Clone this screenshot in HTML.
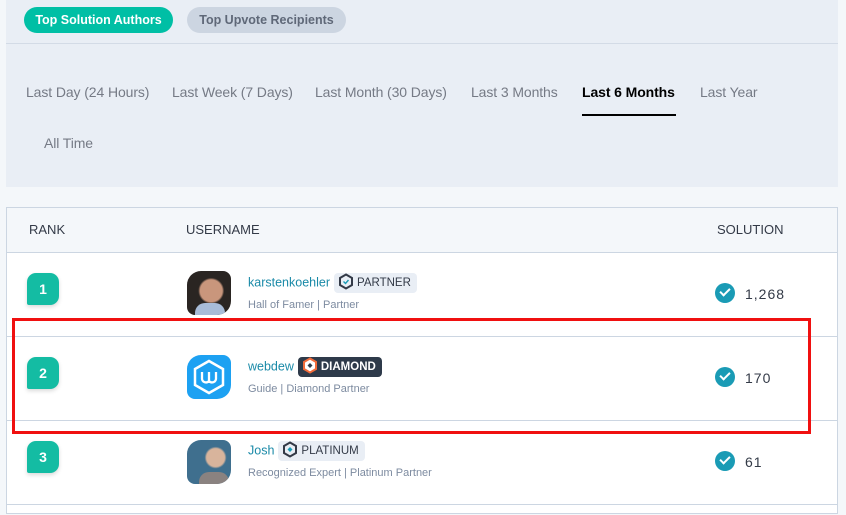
<!DOCTYPE html>
<html><head><style>
*{box-sizing:border-box;margin:0;padding:0}
body{width:846px;height:515px;overflow:hidden;background:#f4f7fa;font-family:"Liberation Sans",sans-serif;position:relative}
.abs{position:absolute}
.top{left:6px;top:0;width:832px;height:187px;background:#e9eef5}
.pill{position:absolute;top:7px;height:26px;border-radius:13px;font-size:12.5px;font-weight:bold;line-height:26px;text-align:center}
.tab{position:absolute;top:84px;font-size:14px;color:#757a85;white-space:nowrap;letter-spacing:-0.1px}
.tbl{left:6px;top:207px;width:832px;height:307px;background:#fff;border:1px solid #ccd6e2}
.hdr{position:absolute;left:0;top:0;width:830px;height:45px;background:#f4f7fa;border-bottom:1px solid #ccd6e2}
.hdr span{position:absolute;top:14px;font-size:13px;color:#333a47}
.row{position:absolute;left:0;width:830px;height:84px;border-bottom:1px solid #ccd6e2}
.rank{position:absolute;left:20px;top:20px;width:32px;height:32px;border-radius:9px 9px 9px 2px;background:#14bca3;color:#fff;font-weight:bold;font-size:14px;text-align:center;line-height:32px;box-shadow:0 2px 4px rgba(0,0,0,.15)}
.av{position:absolute;left:180px;top:18px;width:44px;height:44px;border-radius:14px 8px 14px 8px;overflow:hidden}
.name{position:absolute;left:241px;top:20px;font-size:12.5px;color:#1a8aa8;white-space:nowrap}
.badge{display:inline-block;vertical-align:middle;height:20px;line-height:20px;border-radius:4px;padding:0 6px 0 4px;font-size:11.5px;margin-left:4px;background:#e9eef5;color:#333a47}
.badge svg{vertical-align:-4px;margin-right:3px}
.sub{position:absolute;left:241px;top:46px;font-size:11px;color:#7d8ba0;white-space:nowrap}
.sol{position:absolute;left:708px;top:30px;font-size:14px;color:#333a47;letter-spacing:1px}
.sol i{display:inline-block;width:20px;height:20px;border-radius:50%;background:#1a9bb5;vertical-align:-4px;margin-right:10px;position:relative}
.sol i:after{content:"";position:absolute;left:5px;top:5px;width:8px;height:4px;border-left:2px solid #fff;border-bottom:2px solid #fff;transform:rotate(-45deg)}
</style></head><body>
<div class="abs top">
 <div class="pill" style="left:18px;width:149px;background:#00bfa5;color:#fff">Top Solution Authors</div>
 <div class="pill" style="left:181px;width:159px;background:#ccd5e1;color:#5f6878">Top Upvote Recipients</div>
 <div class="abs" style="left:0;top:43px;width:832px;height:1px;background:#d3dbe6"></div>
 <span class="tab" style="left:20px">Last Day (24 Hours)</span>
 <span class="tab" style="left:166px">Last Week (7 Days)</span>
 <span class="tab" style="left:309px">Last Month (30 Days)</span>
 <span class="tab" style="left:465px">Last 3 Months</span>
 <span class="tab" style="left:576px;color:#000;font-weight:bold">Last 6 Months</span>
 <div class="abs" style="left:576px;top:114px;width:94px;height:2px;background:#000"></div>
 <span class="tab" style="left:694px">Last Year</span>
 <span class="tab" style="left:38px;top:135px">All Time</span>
</div>
<div class="abs tbl">
 <div class="hdr"><span style="left:22px">RANK</span><span style="left:179px">USERNAME</span><span style="left:710px">SOLUTION</span></div>
 <div class="row" style="top:45px">
  <div class="rank">1</div>
  <div class="av" style="background:radial-gradient(circle at 55% 45%,#c9967c 0 11px,#2a2522 13px)"><div style="position:absolute;bottom:0;left:8px;width:30px;height:12px;background:#a8bcd8;border-radius:10px 10px 0 0"></div></div>
  <div class="name">karstenkoehler<span class="badge"><svg width="16" height="17" viewBox="0 0 16 17"><path d="M8 1.5 14 5v7l-6 3.5L2 12V5z" fill="none" stroke="#333a47" stroke-width="2"/><path d="M5.5 8.5l2 2 3-3.5" fill="none" stroke="#1a9bb5" stroke-width="1.4"/></svg>PARTNER</span></div>
  <div class="sub">Hall of Famer | Partner</div>
  <div class="sol"><i></i>1,268</div>
 </div>
 <div class="row" style="top:129px">
  <div class="rank">2</div>
  <div class="av" style="background:#1da1f2"><svg width="44" height="44" viewBox="0 0 44 44"><path d="M22 6 36 14v16L22 38 8 30V14z" fill="none" stroke="#fff" stroke-width="2.5"/><path d="M15 17v7a4 4 0 0 0 7 2 4 4 0 0 0 7-2v-7M22 17v9" fill="none" stroke="#fff" stroke-width="2.3"/></svg></div>
  <div class="name">webdew<span class="badge" style="background:#2e3a4a;color:#fff;font-weight:bold"><svg width="16" height="17" viewBox="0 0 16 17"><path d="M8 1.5 14 5v7l-6 3.5L2 12V5z" fill="#fff" stroke="#f26b3a" stroke-width="2"/><path d="M8 6l2.5 2.5L8 11 5.5 8.5z" fill="#2e3a4a"/></svg>DIAMOND</span></div>
  <div class="sub">Guide | Diamond Partner</div>
  <div class="sol"><i></i>170</div>
 </div>
 <div class="row" style="top:213px">
  <div class="rank">3</div>
  <div class="av" style="top:19px;background:radial-gradient(circle at 65% 40%,#d8b49c 0 9px,#3f6f8e 11px)"><div style="position:absolute;bottom:0;left:12px;width:30px;height:12px;background:#8a8280;border-radius:10px 10px 0 0"></div></div>
  <div class="name">Josh<span class="badge"><svg width="16" height="17" viewBox="0 0 16 17"><path d="M8 1.5 14 5v7l-6 3.5L2 12V5z" fill="none" stroke="#333a47" stroke-width="2"/><path d="M8 6l2.5 2.5L8 11 5.5 8.5z" fill="#1a9bb5"/></svg>PLATINUM</span></div>
  <div class="sub">Recognized Expert | Platinum Partner</div>
  <div class="sol"><i></i>61</div>
 </div>
</div>
<div class="abs" style="left:12px;top:318px;width:799px;height:116px;border:3px solid #f01010"></div>
</body></html>
